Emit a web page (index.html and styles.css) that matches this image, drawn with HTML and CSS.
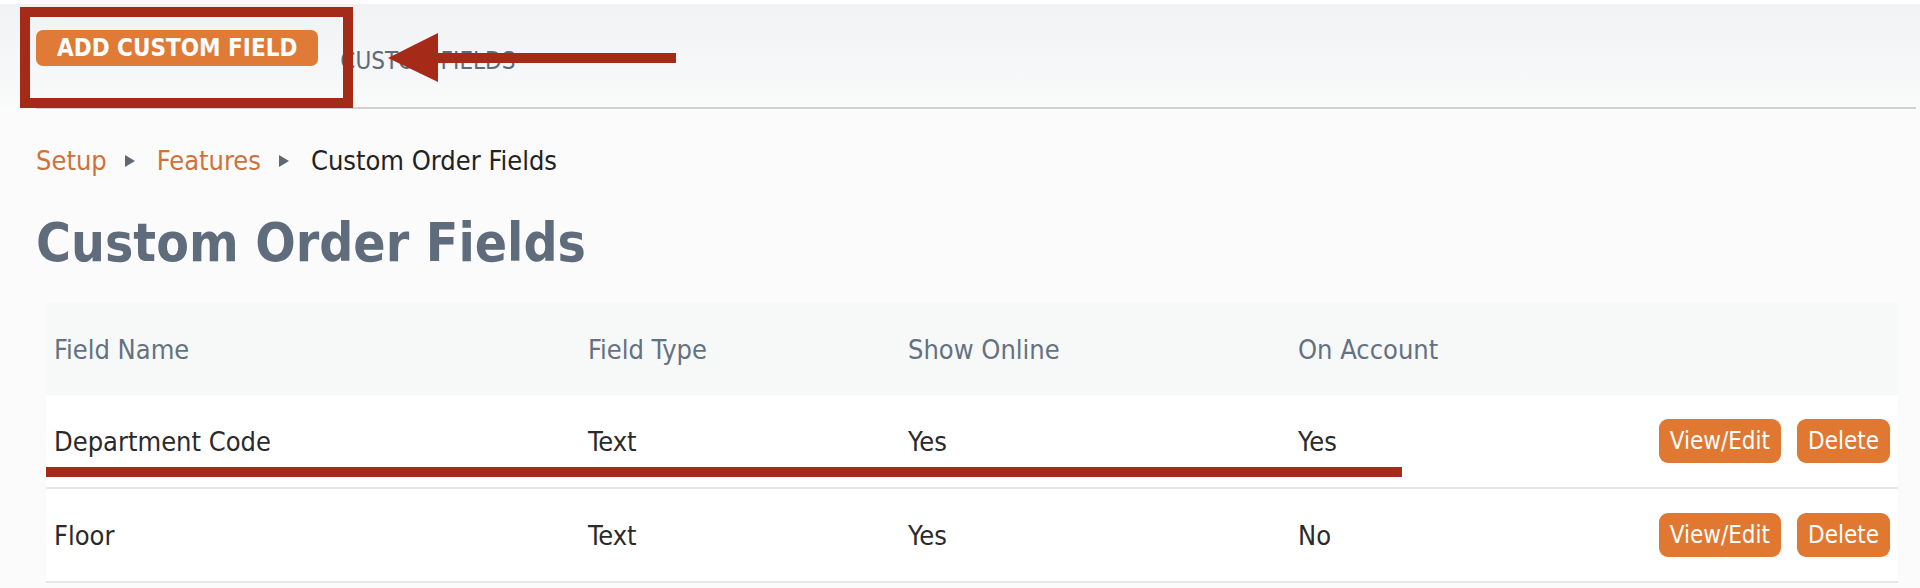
FILE: index.html
```html
<!DOCTYPE html>
<html lang="en">
<head>
<meta charset="utf-8">
<title>Custom Order Fields</title>
<link rel="stylesheet" href="styles.css">
</head>
<body>
<header class="topbar">
  <div class="topbar-inner">
    <button class="btn-add" type="button">ADD CUSTOM FIELD</button>
    <span class="tab">CUSTOM FIELDS</span>
  </div>
  <div class="annot-box"></div>
  <svg class="annot-arrow" width="300" height="60" viewBox="0 0 300 60">
    <rect x="50" y="25" width="246" height="10" fill="#a52a18"/>
    <polygon points="8,30 58,5 58,54" fill="#a52a18"/>
  </svg>
</header>
<div class="topbar-rule"></div>
<main class="content">
  <nav class="crumbs">
    <a class="crumb-link" href="#">Setup</a>
    <svg class="crumb-sep" width="10" height="12" viewBox="0 0 10 12"><polygon points="0,0 10,6 0,12" fill="#5f6975"/></svg>
    <a class="crumb-link" href="#">Features</a>
    <svg class="crumb-sep" width="10" height="12" viewBox="0 0 10 12"><polygon points="0,0 10,6 0,12" fill="#5f6975"/></svg>
    <span class="crumb-current">Custom Order Fields</span>
  </nav>
  <h1 class="title">Custom Order Fields</h1>
  <div class="table">
    <div class="row head">
      <div class="cell">Field Name</div>
      <div class="cell">Field Type</div>
      <div class="cell">Show Online</div>
      <div class="cell">On Account</div>
      <div class="cell"></div>
    </div>
    <div class="row body">
      <div class="cell">Department Code</div>
      <div class="cell">Text</div>
      <div class="cell">Yes</div>
      <div class="cell">Yes</div>
      <div class="cell actions">
        <button class="btn-sm" type="button">View/Edit</button>
        <button class="btn-sm" type="button">Delete</button>
      </div>
      <span class="annot-underline"></span>
    </div>
    <div class="row body">
      <div class="cell">Floor</div>
      <div class="cell">Text</div>
      <div class="cell">Yes</div>
      <div class="cell">No</div>
      <div class="cell actions">
        <button class="btn-sm" type="button">View/Edit</button>
        <button class="btn-sm" type="button">Delete</button>
      </div>
    </div>
  </div>
</main>
</body>
</html>
```
FILE: styles.css
```css
* { box-sizing: border-box; }

html, body {
  margin: 0;
  padding: 0;
}

body {
  background: #fbfbfb;
  font-family: "DejaVu Sans Condensed", "DejaVu Sans", sans-serif;
  font-stretch: condensed;
  color: #2a2a2a;
  width: 1920px;
  height: 588px;
  overflow: hidden;
}

.topbar {
  position: relative;
  height: 107px;
  background: linear-gradient(#ffffff 0, #ffffff 4px, #f1f2f4 4px, #f9fafa 100%);
}

.topbar-inner {
  display: flex;
  align-items: flex-start;
  padding: 30px 0 0 36px;
}

.btn-add {
  height: 36px;
  padding: 0 21px;
  border: none;
  border-radius: 7px;
  background: #e07b37;
  color: #fff;
  font-family: inherit;
  font-stretch: condensed;
  font-weight: bold;
  font-size: 24px;
  line-height: 36px;
}

.tab {
  margin: 17px 0 0 22px;
  font-size: 24px;
  line-height: 28px;
  color: #5f6b78;
}

.annot-box {
  position: absolute;
  left: 20px;
  top: 7px;
  width: 333px;
  height: 101px;
  border: 10px solid #a52a18;
}

.annot-arrow {
  position: absolute;
  left: 380px;
  top: 28px;
}

.topbar-rule {
  height: 2px;
  margin: 0 4px 0 36px;
  background: #d0d3d3;
}

.content {
  padding: 0 22px 0 36px;
}

.crumbs {
  display: flex;
  align-items: center;
  margin-top: 36px;
  font-size: 27px;
  line-height: 32px;
}

.crumb-link {
  color: #d0713a;
  text-decoration: none;
}

.crumb-sep {
  margin: 0 22px 0 18px;
}

.crumb-current {
  color: #222;
}

.title {
  margin: 36px 0 0;
  font-size: 53px;
  line-height: 60px;
  font-weight: bold;
  color: #5f6c7b;
}

.table {
  margin: 30px 0 0 10px;
}

.row {
  position: relative;
  display: grid;
  grid-template-columns: 534px 320px 390px 1fr 1fr;
  align-items: center;
  height: 92px;
  padding: 0 8px;
  font-size: 27px;
}

.row.head {
  background: #f7f9f9;
  color: #657181;
}

.row.body {
  box-sizing: content-box;
  background: #fff;
  border-bottom: 2px solid #e6e7e8;
  color: #2a2a2a;
}

.row .actions {
  display: flex;
  justify-content: flex-end;
  gap: 16px;
}

.btn-sm {
  height: 44px;
  padding: 0 11px;
  border: none;
  border-radius: 9px;
  background: #e17832;
  color: #fff;
  font-family: inherit;
  font-stretch: condensed;
  font-size: 24px;
  line-height: 44px;
}

.annot-underline {
  position: absolute;
  left: 0;
  top: 72px;
  width: 1356px;
  height: 10px;
  background: #a52a18;
}
```
